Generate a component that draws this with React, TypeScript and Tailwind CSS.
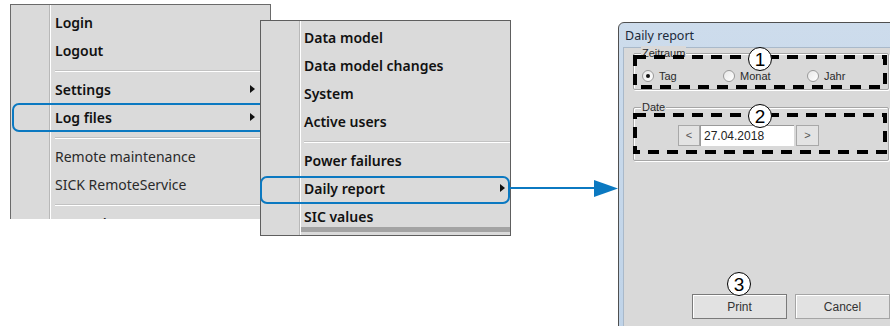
import React from 'react';

type Item = { label: string; sub?: boolean; light?: boolean } | 'sep';

const mainMenu: Item[] = [
  { label: 'Login' },
  { label: 'Logout' },
  'sep',
  { label: 'Settings', sub: true },
  { label: 'Log files', sub: true },
  'sep',
  { label: 'Remote maintenance', light: true },
  { label: 'SICK RemoteService', light: true },
  'sep',
  { label: 'Operating system', sub: true },
];

const logMenu: Item[] = [
  { label: 'Data model' },
  { label: 'Data model changes' },
  { label: 'System' },
  { label: 'Active users' },
  'sep',
  { label: 'Power failures' },
  { label: 'Daily report', sub: true },
];

function Triangle() {
  return (
    <svg width="5" height="8" viewBox="0 0 5 8" className="shrink-0">
      <polygon points="0,0 5,4 0,8" fill="#111" />
    </svg>
  );
}

function MenuRows({ items, arrowPad }: { items: Item[]; arrowPad: string }) {
  return (
    <>
      {items.map((it, i) =>
        it === 'sep' ? (
          <div key={i} className="h-[11px] pt-[6px]">
            <div className="h-px bg-[#c2c2c2]" />
            <div className="h-px bg-white" />
          </div>
        ) : (
          <div key={i} className={`h-[28px] flex items-center justify-between ${arrowPad}`}>
            <span className={it.light ? 'font-normal text-[#2a2a2a]' : 'font-semibold text-[#111]'}>{it.label}</span>
            {it.sub && <Triangle />}
          </div>
        )
      )}
    </>
  );
}

function Gutter() {
  return (
    <>
      <div className="w-[38px] shrink-0" />
      <div className="w-px shrink-0 bg-[#b8b8b8]" />
      <div className="w-px shrink-0 bg-white" />
    </>
  );
}

function Radio({ label, checked, w }: { label: string; checked?: boolean; w: string }) {
  return (
    <div className={`flex items-center gap-[5px] ${w}`}>
      <div className="w-[12px] h-[12px] rounded-full border border-[#9a9a9a] bg-gradient-to-br from-[#e8e8e8] to-white flex items-center justify-center">
        {checked && <div className="w-[4px] h-[4px] rounded-full bg-[#111]" />}
      </div>
      <span>{label}</span>
    </div>
  );
}

function GroupBox({ title, h, children }: { title: string; h: string; children: React.ReactNode }) {
  return (
    <div className={`relative ml-[9px] w-[256px] ${h} border border-[#a6a6a6] rounded-[2px] shadow-[inset_1px_1px_0_#fff,1px_1px_0_#fff]`}>
      <span className="absolute -top-[8px] left-[7px] bg-[#d9d9d9] px-[1px] leading-[14px]">{title}</span>
      {children}
    </div>
  );
}

function Callout({ n, x, y }: { n: number; x: number; y: number }) {
  return (
    <div
      className="absolute w-[24px] h-[24px] rounded-full border-[1.5px] border-black bg-white flex items-center justify-center text-[19px] leading-none text-black font-['Liberation_Sans',sans-serif]"
      style={{ left: x - 12, top: y - 12 }}
    >
      {n}
    </div>
  );
}

export default function App() {
  return (
    <div className="relative w-[890px] h-[326px] overflow-hidden bg-white font-['Noto_Sans',sans-serif] text-[14px]">
      {/* main menu, cut off at the bottom */}
      <div className="absolute left-[10px] top-[4px] w-[261px] h-[215px] overflow-hidden border-x border-t border-[#6a6a6a] bg-[#dadada] flex">
        <Gutter />
        <div className="flex-1 pl-[4px] pt-[3px]">
          <MenuRows items={mainMenu} arrowPad="pr-[15px]" />
        </div>
      </div>

      {/* Log files highlight, runs under the submenu */}
      <div className="absolute left-[12px] top-[103px] w-[262px] h-[29px] rounded-[7px] border-2 border-[#0b79c1]" />

      {/* Log files submenu */}
      <div className="absolute left-[260px] top-[20px] w-[251px] h-[216px] border border-[#5e5e5e] bg-[#dadada] flex">
        <Gutter />
        <div className="flex-1 pl-[3px] pt-[2px] flex flex-col">
          <MenuRows items={logMenu} arrowPad="pr-[5px]" />
          <div className="h-[25px] pt-[3px] flex items-center font-semibold text-[#111]">SIC values</div>
          <div className="-ml-[3px] h-[5px] bg-[#a3a3a3]" />
        </div>
      </div>

      {/* Daily report highlight + arrow */}
      <div className="absolute left-[260px] top-[176px] w-[250px] h-[28px] rounded-[7px] border-2 border-[#0b79c1]" />
      <svg className="absolute left-0 top-0 pointer-events-none" width="890" height="326">
        <line x1="509" y1="188" x2="598" y2="188" stroke="#0b79c1" strokeWidth="2.2" />
        <polygon points="594,180 618,188.5 594,197" fill="#0b79c1" />
      </svg>

      {/* Daily report dialog */}
      <div className="absolute left-[618px] top-[22px] w-[300px] h-[320px] border border-[#4f4f4f] rounded-tl-[6px] bg-gradient-to-b from-[#cddcec] to-[#bfd3e8] flex flex-col font-['Liberation_Sans',sans-serif]">
        <div className="h-[24px] shrink-0 pl-[6px] pt-[5px] text-[12.5px] text-[#1c2a3a] font-['Noto_Sans',sans-serif] leading-[16px]">
          Daily report
        </div>
        <div className="ml-[4px] flex-1 bg-[#d9d9d9] border-l border-t border-[#a9b9ca] pt-[5px] text-[11px] text-[#2b2b2b]">
          <GroupBox title="Zeitraum" h="h-[37px]">
            <div className="flex items-center pl-[8px] pt-[14px]">
              <Radio label="Tag" checked w="w-[81px]" />
              <Radio label="Monat" w="w-[84px]" />
              <Radio label="Jahr" w="w-[60px]" />
            </div>
          </GroupBox>
          <div className="h-[17px]" />
          <GroupBox title="Date" h="h-[54px]">
            <div className="flex items-center pl-[44px] pt-[17px]">
              <div className="w-[22px] h-[21px] border border-[#a8a8a8] bg-[#e3e3e3] flex items-center justify-center text-[#555]">&lt;</div>
              <div className="w-[94px] h-[21px] bg-white border-t border-l border-[#9a9a9a] pl-[3px] flex items-center text-[12px] text-[#222]">27.04.2018</div>
              <div className="ml-[2px] w-[23px] h-[21px] border border-[#a8a8a8] bg-[#e3e3e3] flex items-center justify-center text-[#555]">&gt;</div>
            </div>
          </GroupBox>
          <div className="flex gap-[8px] ml-[68px] mt-[133px]">
            <div className="w-[95px] h-[25px] border border-[#7a7a7a] bg-[#e2e2e2] shadow-[inset_1px_1px_0_#fff] flex items-center justify-center text-[12px] text-[#333]">Print</div>
            <div className="w-[95px] h-[25px] border border-[#a5a5a5] bg-[#e2e2e2] shadow-[inset_1px_1px_0_#fff] flex items-center justify-center text-[12px] text-[#333]">Cancel</div>
          </div>
        </div>
      </div>

      {/* dashed callout frames */}
      <svg className="absolute left-0 top-0 pointer-events-none" width="890" height="326">
        <rect x="635" y="57" width="250" height="30" fill="none" stroke="#000" strokeWidth="4" strokeDasharray="11 8" />
        <rect x="635" y="115" width="250" height="37" fill="none" stroke="#000" strokeWidth="4" strokeDasharray="11 8" />
      </svg>

      <Callout n={1} x={760} y={59} />
      <Callout n={2} x={760} y={116} />
      <Callout n={3} x={739} y={284} />
    </div>
  );
}
